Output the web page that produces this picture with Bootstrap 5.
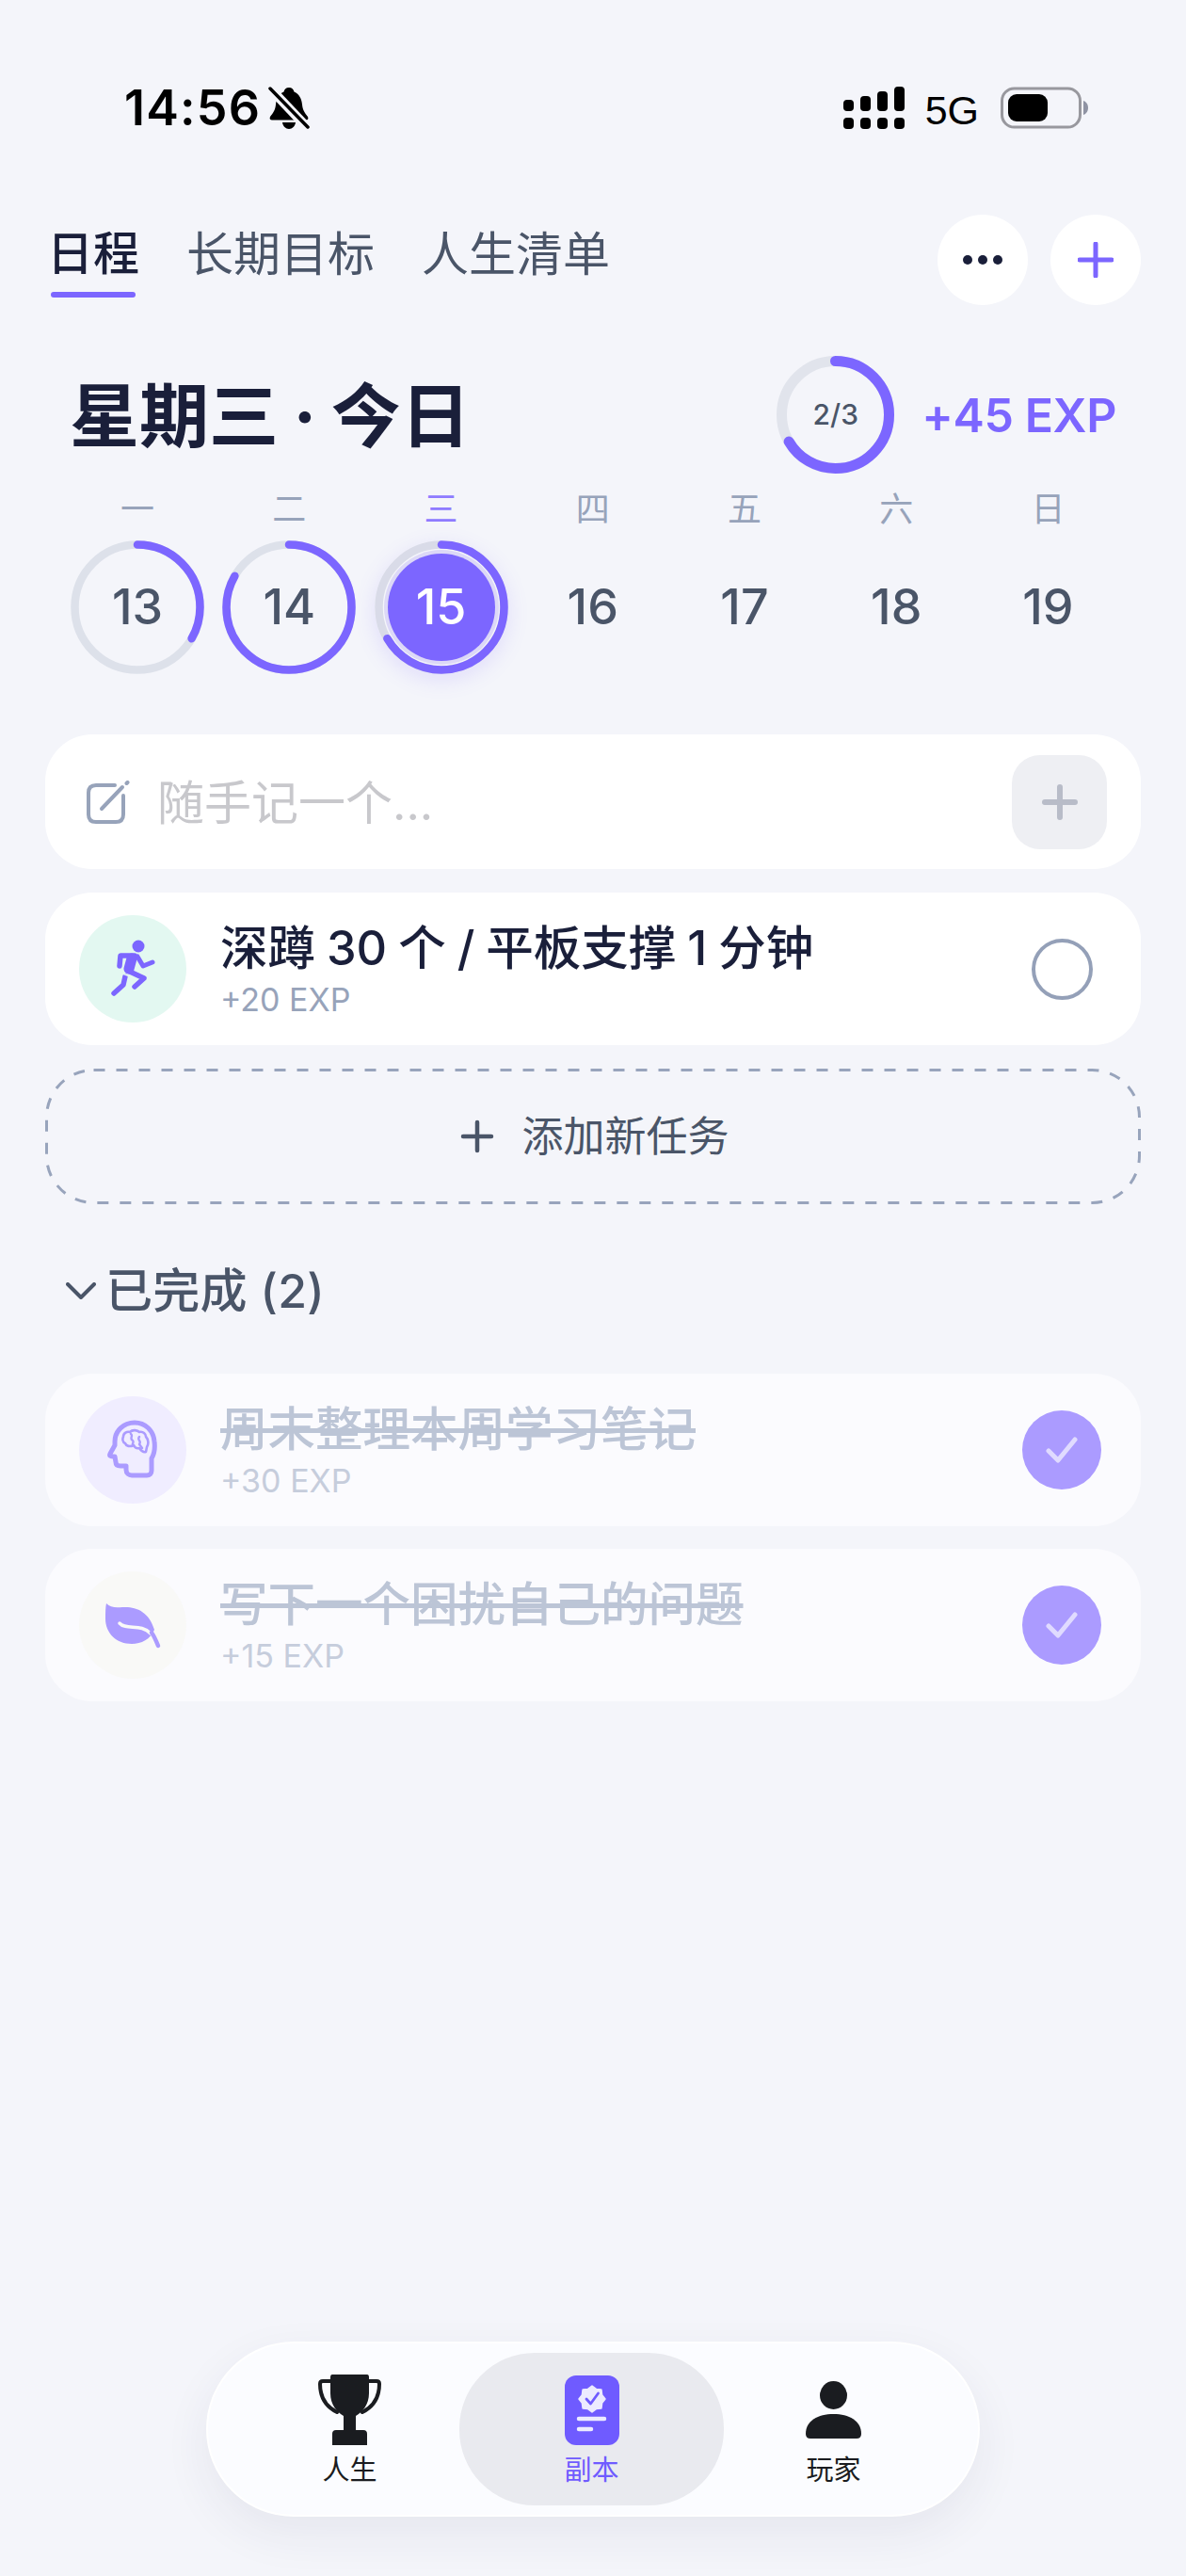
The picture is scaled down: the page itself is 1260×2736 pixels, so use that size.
<!DOCTYPE html>
<html lang="zh-CN">
<head>
  <meta charset="UTF-8">
  <meta name="viewport" content="width=device-width, initial-scale=1.0">
  <title>日程</title>
  <link href="https://cdn.jsdelivr.net/npm/bootstrap@5.3.3/dist/css/bootstrap.min.css" rel="stylesheet">
  <style>
    body {
      background: #f4f5fa;
      font-family: "Inter", "Noto Sans CJK SC", sans-serif;
      color: #1a1f3a;
    }
    .screen { width: 1260px; height: 2736px; }
    .status-row { height: 46px; margin-top: 92px; padding: 0 104px 0 132px; }
    .clock { font-size: 52px; font-weight: 600; line-height: 46px; letter-spacing: 1.2px; color: #000; }
    .net-label { margin: 4px 23px 0 22px; font-family: "Liberation Sans", sans-serif; font-size: 43px; line-height: 46px; color: #000; }
    .top-row { height: 96px; margin-top: 90px; padding: 0 48px 0 50px; }
    .tab-link { display: block; padding: 12px 0 0; font-size: 50px; line-height: 60px; color: #4a5568; text-decoration: none; }
    .tab-link.on { width: 100px; color: #1a1f3a; font-weight: 500; font-size: 49px; }
    .tab-line { width: 90px; height: 6px; margin: 10px 0 0 4px; border-radius: 3px; background: #7c66ff; }
    .tab-last { margin-left: 2px; }
    .round-btn { width: 96px; height: 96px; padding: 0; border: 0; background: #fff; }
    .head-row { height: 125px; margin-top: 54px; padding: 0 74px; }
    .day-title { margin: 3px 0 0; font-size: 74px; line-height: 80px; font-weight: 700; word-spacing: -2px; color: #1a1f3a; }
    .stack { display: grid; place-items: center; }
    .stack > * { grid-area: 1 / 1; }
    .goal-text { font-size: 30px; font-weight: 500; color: #4a5568; }
    .exp-gap { gap: 29px; }
    .exp-total { font-size: 50px; font-weight: 600; line-height: 60px; letter-spacing: -.4px; color: #7c66ff; }
    .week-row { padding: 0 66px 0 65.5px; margin-top: 16px; }
    .day-col { flex: 1 1 0; }
    .day-name { font-size: 36px; line-height: 44px; color: #97a3ba; }
    .day-name.on { color: #8f7bff; }
    .day-ring { width: 142px; height: 142px; margin-top: 11px; border-radius: 50%; }
    .day-ring.on { box-shadow: 0 6px 22px rgba(124, 102, 255, .16); }
    .day-num { font-size: 52px; font-weight: 550; line-height: 60px; color: #4a5568; }
    .day-fill { width: 114px; height: 114px; border-radius: 50%; background: #7c66ff; box-shadow: 0 0 0 4px #dcd8f7; color: #fff; }
    .list-wrap { padding: 0 48px; }
    .tile { border-radius: 50px; background: #fff; }
    .quick-tile { height: 143px; margin-top: 64px; padding: 0 36px 0 44px; }
    .quick-pen { margin-right: 28px; flex: none; }
    .quick-text { padding-top: 2px; font-size: 50px; line-height: 60px; color: #c8c8cc; }
    .quick-add { width: 101px; height: 100px; padding: 0; border: 0; border-radius: 30px; background: #eeeff3; }
    .task-tile { height: 162px; margin-top: 25px; padding: 0 51px 0 36px; }
    .task-circle { width: 114px; height: 114px; margin-right: 36px; flex: none; border-radius: 50%; }
    .tint-mint { background: #e3f8f1; }
    .tint-violet { background: #f0edff; }
    .tint-sand { background: #f9f9f7; }
    .task-copy { padding-top: 1px; }
    .task-name { font-size: 50.5px; line-height: 60px; font-weight: 500; word-spacing: -1.5px; color: #1a1f3a; }
    .task-exp { margin-top: 5px; font-size: 34px; line-height: 40px; color: #97a3ba; }
    .check-empty { width: 65px; height: 65px; flex: none; border: 4.5px solid #94a0b8; border-radius: 50%; }
    .add-tile { height: 144px; margin-top: 25px; padding-left: 3px; gap: 30px; font-size: 44px; color: #4a5568; }
    .add-outline { position: absolute; inset: 0; }
    .done-head { height: 60px; margin-top: 62px; padding-left: 22px; gap: 10px; font-size: 50px; line-height: 60px; font-weight: 500; letter-spacing: .3px; color: #4a5568; }
    .done-first { margin-top: 58px; }
    .done-next { margin-top: 24px; }
    .done-tile { background: #fbfbfe; padding-right: 42px; }
    .done-tile .task-name { font-weight: 500; color: #bcc5d6; text-decoration-thickness: 4px; }
    .done-tile .task-exp { color: #c6cddc; }
    .check-full { width: 84px; height: 84px; flex: none; border-radius: 50%; background: #ab9bff; }
    .dock { width: 822px; height: 186px; margin-bottom: 63px; padding: 0 25px 0 22px; border: 2px solid #fff; border-radius: 93px; background: #fbfcff; box-shadow: 0 18px 50px rgba(40, 44, 80, .07); }
    .dock-item { width: 257px; height: 162px; padding-top: 23px; flex: none; border-radius: 80px; color: #1a1c20; text-decoration: none; }
    .dock-item.on { width: 281px; margin: 0 -12px; background: #e9eaef; color: #6f5bff; }
    .dock-icon { height: 75px; }
    .dock-label { margin-top: 7px; font-size: 29px; line-height: 40px; }
  </style>
</head>
<body>
  <div class="screen d-flex flex-column">

    <div class="status-row d-flex align-items-center justify-content-between">
      <div class="d-flex align-items-center gap-2">
        <span class="clock">14:56</span>
        <svg width="44" height="46" viewBox="0 0 44 46">
          <path d="M22 1c3 0 5 2 5.500 4.500C33 8 35.500 13 36 19c.5 6 3 9 6 13 1 2 0 3.500-2 3.500H4c-2 0-3-1.500-2-3.500 3-4 5.500-7 6-13 .5-6 3-11 8.500-13.500C17 3 19 1 22 1z" fill="#000"/>
          <path d="M15 38h14c-.5 4-3.500 7-7 7s-6.500-3-7-7z" fill="#000"/>
          <path d="M3 3l38 40" stroke="#f4f5fa" stroke-width="10"/>
          <path d="M2 2l40 41" stroke="#000" stroke-width="3.500" stroke-linecap="round"/>
        </svg>
      </div>
      <div class="d-flex align-items-center">
        <svg width="65" height="46" viewBox="0 0 65 46" fill="#000">
          <rect x="0" y="14" width="11" height="12" rx="4"/><rect x="18" y="10" width="11" height="16" rx="4"/><rect x="36" y="5" width="11" height="21" rx="4"/><rect x="54" y="0" width="11" height="26" rx="4"/>
          <rect x="0" y="33" width="11" height="12" rx="4"/><rect x="18" y="33" width="11" height="12" rx="4"/><rect x="36" y="33" width="11" height="12" rx="4"/><rect x="54" y="33" width="11" height="12" rx="4"/>
        </svg>
        <span class="net-label">5G</span>
        <svg width="93" height="46" viewBox="0 0 93 46">
          <rect x="1.500" y="2" width="83" height="41" rx="13" fill="none" stroke="#98989e" stroke-width="3"/>
          <rect x="8" y="8" width="42" height="29" rx="9" fill="#000"/>
          <path d="M88 15c3 1 5 4 5 7.500S91 29 88 30z" fill="#8f93a3"/>
        </svg>
      </div>
    </div>

    <div class="top-row d-flex justify-content-between">
      <ul class="nav gap-5 align-items-start">
        <li class="nav-item"><a class="tab-link on" href="#">日程</a><div class="tab-line"></div></li>
        <li class="nav-item"><a class="tab-link" href="#">长期目标</a></li>
        <li class="nav-item tab-last"><a class="tab-link" href="#">人生清单</a></li>
      </ul>
      <div class="d-flex gap-4">
        <button type="button" class="btn round-btn rounded-circle d-flex align-items-center justify-content-center" aria-label="更多">
          <svg width="44" height="12" viewBox="0 0 44 12" fill="#1a1f3a"><circle cx="6" cy="6" r="5"/><circle cx="22" cy="6" r="5"/><circle cx="38" cy="6" r="5"/></svg>
        </button>
        <button type="button" class="btn round-btn rounded-circle d-flex align-items-center justify-content-center" aria-label="添加">
          <svg width="38" height="38" viewBox="0 0 38 38" stroke="#7c66ff" stroke-width="5" stroke-linecap="round"><path d="M19 2v34M2 19h34"/></svg>
        </button>
      </div>
    </div>

    <div class="head-row d-flex align-items-center justify-content-between">
      <h1 class="day-title">星期三 · 今日</h1>
      <div class="d-flex align-items-center exp-gap">
        <div class="stack">
          <svg width="125" height="125" viewBox="0 0 125 125">
            <circle cx="62.500" cy="62.500" r="57" fill="none" stroke="#e1e4ec" stroke-width="11"/>
            <circle cx="62.500" cy="62.500" r="57" fill="none" stroke="#7c66ff" stroke-width="11" stroke-linecap="round" pathLength="360" stroke-dasharray="240 360" transform="rotate(-90 62.500 62.500)"/>
          </svg>
          <span class="goal-text">2/3</span>
        </div>
        <span class="exp-total">+45 EXP</span>
      </div>
    </div>

    <div class="week-row d-flex">
      <div class="day-col d-flex flex-column align-items-center">
        <span class="day-name">一</span>
        <div class="day-ring stack">
          <svg width="142" height="142" viewBox="0 0 142 142">
            <circle cx="71" cy="71" r="66.500" fill="none" stroke="#dde1ea" stroke-width="8.500"/>
            <circle cx="71" cy="71" r="66.500" fill="none" stroke="#7c66ff" stroke-width="8.500" stroke-linecap="round" pathLength="360" stroke-dasharray="120 360" transform="rotate(-90 71 71)"/>
          </svg>
          <span class="day-num">13</span>
        </div>
      </div>
      <div class="day-col d-flex flex-column align-items-center">
        <span class="day-name">二</span>
        <div class="day-ring stack">
          <svg width="142" height="142" viewBox="0 0 142 142">
            <circle cx="71" cy="71" r="66.500" fill="none" stroke="#dde1ea" stroke-width="8.500"/>
            <circle cx="71" cy="71" r="66.500" fill="none" stroke="#7c66ff" stroke-width="8.500" stroke-linecap="round" pathLength="360" stroke-dasharray="300 360" transform="rotate(-90 71 71)"/>
          </svg>
          <span class="day-num">14</span>
        </div>
      </div>
      <div class="day-col d-flex flex-column align-items-center">
        <span class="day-name on">三</span>
        <div class="day-ring on stack">
          <svg width="142" height="142" viewBox="0 0 142 142">
            <circle cx="71" cy="71" r="66.500" fill="none" stroke="#d9dbe8" stroke-width="8.500"/>
            <circle cx="71" cy="71" r="66.500" fill="none" stroke="#7c66ff" stroke-width="8.500" stroke-linecap="round" pathLength="360" stroke-dasharray="240 360" transform="rotate(-90 71 71)"/>
          </svg>
          <div class="day-fill day-num stack"><span>15</span></div>
        </div>
      </div>
      <div class="day-col d-flex flex-column align-items-center">
        <span class="day-name">四</span>
        <div class="day-ring stack"><span class="day-num">16</span></div>
      </div>
      <div class="day-col d-flex flex-column align-items-center">
        <span class="day-name">五</span>
        <div class="day-ring stack"><span class="day-num">17</span></div>
      </div>
      <div class="day-col d-flex flex-column align-items-center">
        <span class="day-name">六</span>
        <div class="day-ring stack"><span class="day-num">18</span></div>
      </div>
      <div class="day-col d-flex flex-column align-items-center">
        <span class="day-name">日</span>
        <div class="day-ring stack"><span class="day-num">19</span></div>
      </div>
    </div>

    <div class="list-wrap d-flex flex-column">
      <div class="tile quick-tile d-flex align-items-center">
        <svg class="quick-pen" width="47" height="46" viewBox="0 0 47 46" fill="none" stroke="#97a3ba" stroke-linecap="round">
          <path d="M30 5H10Q2 5 2 13V36Q2 44 10 44H31Q39 44 39 36V16" stroke-width="4"/>
          <path d="M16 30L38 7" stroke-width="4"/>
          <path d="M42.500 3l1 -1" stroke-width="4"/>
        </svg>
        <span class="quick-text flex-grow-1">随手记一个...</span>
        <button type="button" class="btn quick-add d-flex align-items-center justify-content-center" aria-label="记录">
          <svg width="38" height="38" viewBox="0 0 38 38" stroke="#b8bcc8" stroke-width="6" stroke-linecap="round"><path d="M19 3v32M3 19h32"/></svg>
        </button>
      </div>

      <div class="tile task-tile d-flex align-items-center">
        <div class="task-circle tint-mint">
          <svg width="114" height="114" viewBox="-16 -18 114 114">
            <circle cx="47" cy="15" r="6.500" fill="#7c66ff"/>
            <g fill="none" stroke="#7c66ff" stroke-linecap="round" stroke-linejoin="round">
              <path d="M27 36L28 25H43" stroke-width="5.500"/>
              <path d="M40 28L37 39" stroke-width="11"/>
              <path d="M46 26L52 36L62 32" stroke-width="5"/>
              <path d="M38 42L53 49L43 58" stroke-width="5.500"/>
              <path d="M33 47L31 56L21 65" stroke-width="5.500"/>
            </g>
            <path d="M30 44L38 47" fill="none" stroke="#e3f8f1" stroke-width="1.500"/>
          </svg>
        </div>
        <div class="task-copy flex-grow-1">
          <div class="task-name">深蹲 30 个 / 平板支撑 1 分钟</div>
          <div class="task-exp">+20 EXP</div>
        </div>
        <div class="check-empty"></div>
      </div>

      <div class="add-tile position-relative d-flex align-items-center justify-content-center">
        <svg class="add-outline" width="1164" height="144" viewBox="0 0 1164 144">
          <rect x="1.500" y="1.500" width="1161" height="141" rx="50" fill="none" stroke="#98a4bc" stroke-width="3" stroke-dasharray="12 12"/>
        </svg>
        <svg width="36" height="36" viewBox="0 0 36 36" stroke="#4a5568" stroke-width="4.500" stroke-linecap="round"><path d="M18 3v30M3 18h30"/></svg>
        <span>添加新任务</span>
      </div>

      <div class="done-head d-flex align-items-center">
        <svg width="32" height="18" viewBox="0 0 32 18" fill="none" stroke="#4a5568" stroke-width="4" stroke-linecap="round" stroke-linejoin="round"><path d="M2 2l14 14L30 2"/></svg>
        <span>已完成 (2)</span>
      </div>

      <div class="tile task-tile done-tile done-first d-flex align-items-center">
        <div class="task-circle tint-violet">
          <svg width="114" height="114" viewBox="-17 -18 114 114">
            <g fill="none" stroke="#ab9bff" stroke-linecap="round" stroke-linejoin="round">
              <path d="M42 10C30 10 21 19 21 30V34L16 43C15 45 16 46 19 46H21L22 52C22 55 24 56 27 56H33V60C33 64 36 66 39 66H55C58 66 60 64 60 61V48C63 43 64 38 63 30 62 18 53 10 42 10Z" stroke-width="5"/>
              <path d="M30 25C30 21 34 19 37 20 40 17 45 18 47 20 51 19 54 22 54 25 57 28 57 33 55 36L54 41C51 42 49 40 47 37 44 38 42 36 41 34 37 36 33 35 32 32 29 31 29 27 30 25Z" stroke-width="2.600"/>
              <path d="M38 22C41 24 36 27 40 29 42 31 38 33 41 34M47 25C44 29 50 29 47 33L50 37" stroke-width="2.400"/>
            </g>
          </svg>
        </div>
        <div class="task-copy flex-grow-1">
          <div class="task-name text-decoration-line-through">周末整理本周学习笔记</div>
          <div class="task-exp">+30 EXP</div>
        </div>
        <div class="check-full d-flex align-items-center justify-content-center">
          <svg width="34" height="28" viewBox="0 0 34 28" fill="none" stroke="#e0dbff" stroke-width="5" stroke-linecap="round" stroke-linejoin="round"><path d="M3 15l10 10L31 3"/></svg>
        </div>
      </div>

      <div class="tile task-tile done-tile done-next d-flex align-items-center">
        <div class="task-circle tint-sand">
          <svg width="114" height="114" viewBox="0 0 114 114">
            <path d="M29 34C33 38 38 39 46 38 60 37 74 42 80 62 76 72 66 77 56 77 40 77 28 66 28 50 28 44 28 38 29 34Z" fill="#ab9bff"/>
            <path d="M43 55C50 63 66 55 76 66" fill="none" stroke="#f9f9f7" stroke-width="3.500" stroke-linecap="round"/>
            <path d="M77 65C80 69 82 74 84 79" fill="none" stroke="#ab9bff" stroke-width="4.500" stroke-linecap="round"/>
          </svg>
        </div>
        <div class="task-copy flex-grow-1">
          <div class="task-name text-decoration-line-through">写下一个困扰自己的问题</div>
          <div class="task-exp">+15 EXP</div>
        </div>
        <div class="check-full d-flex align-items-center justify-content-center">
          <svg width="34" height="28" viewBox="0 0 34 28" fill="none" stroke="#e0dbff" stroke-width="5" stroke-linecap="round" stroke-linejoin="round"><path d="M3 15l10 10L31 3"/></svg>
        </div>
      </div>
    </div>

    <div class="dock mt-auto mx-auto d-flex align-items-center">
      <a class="dock-item d-flex flex-column align-items-center" href="#">
        <div class="dock-icon d-flex align-items-center">
          <svg width="67" height="75" viewBox="0 0 67 75">
            <path d="M14 7H5Q2 7 2 10C2 24 8 34 20 40M53 7H62Q65 7 65 10C65 24 59 34 47 40" fill="none" stroke="#1a1c20" stroke-width="4" stroke-linecap="round"/>
            <path d="M15 0H52Q54 0 54 3V20C54 32 47 40 40 44V59H48Q52 59 52 63V75H15V63Q15 59 19 59H27V44C20 40 13 32 13 20V3Q13 0 15 0Z" fill="#1a1c20"/>
          </svg>
        </div>
        <span class="dock-label">人生</span>
      </a>
      <a class="dock-item on d-flex flex-column align-items-center" href="#">
        <div class="dock-icon d-flex align-items-center">
          <svg width="58" height="74" viewBox="0 0 58 74">
            <rect width="58" height="74" rx="12" fill="#6f5bff"/>
            <polygon points="29,11 33.400,14.400 38.900,15.100 39.600,20.600 43,25 39.600,29.400 38.900,34.900 33.400,35.600 29,39 24.600,35.600 19.100,34.900 18.400,29.400 15,25 18.400,20.600 19.100,15.100 24.600,14.400" fill="#ecebff" stroke="#ecebff" stroke-width="1.500" stroke-linejoin="round"/>
            <path d="M23 25l4.500 5L35.500 19" fill="none" stroke="#6f5bff" stroke-width="2.800" stroke-linecap="round" stroke-linejoin="round"/>
            <path d="M15 46H42M15 57H28" stroke="#ecebff" stroke-width="4.500" stroke-linecap="round"/>
          </svg>
        </div>
        <span class="dock-label">副本</span>
      </a>
      <a class="dock-item d-flex flex-column align-items-center" href="#">
        <div class="dock-icon d-flex align-items-center">
          <svg width="59" height="61" viewBox="0 0 59 61" fill="#1a1c20">
            <ellipse cx="29.500" cy="15" rx="14.500" ry="15"/>
            <path d="M0 56C0 42 13 35 29.500 35S59 42 59 56Q59 61 54 61H5Q0 61 0 56Z"/>
          </svg>
        </div>
        <span class="dock-label">玩家</span>
      </a>
    </div>

  </div>

  <script src="https://cdn.jsdelivr.net/npm/bootstrap@5.3.3/dist/js/bootstrap.bundle.min.js"></script>
</body>
</html>
